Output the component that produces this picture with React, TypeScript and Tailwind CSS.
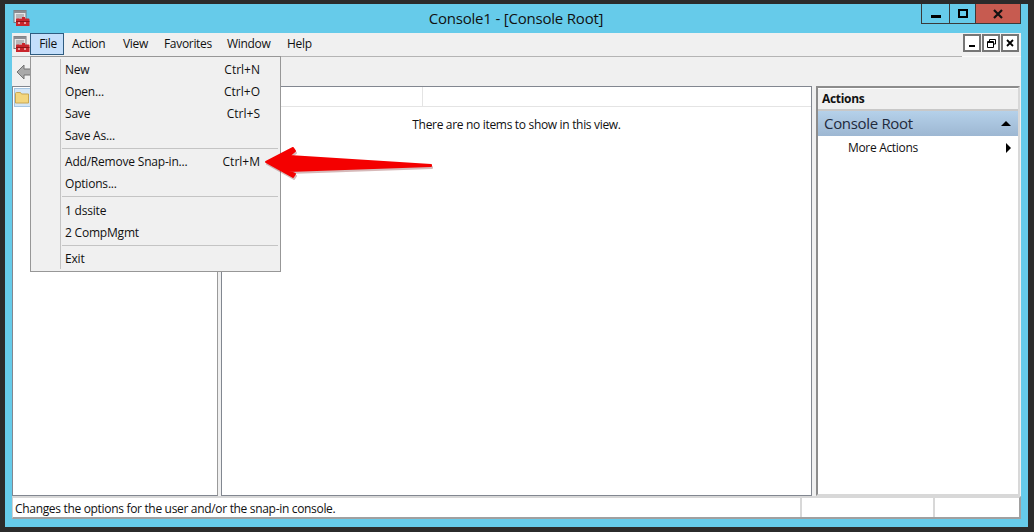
import React from 'react';

const font = "font-['Open_Sans','Noto_Sans',sans-serif] tracking-[-0.32px]";

const ConsoleIcon = () => (
  <svg width="17" height="17" viewBox="0 0 17 17" className="shrink-0">
    <rect x="1" y="0.5" width="12" height="12" fill="#e8e8ea" stroke="#77787c" />
    <rect x="1" y="0.5" width="12" height="2.5" fill="#8b8d92" />
    <path d="M3 5h8M3 7h8M3 9h3" stroke="#85878c" />
    <path d="M6 8.5h3V7h3v1.5h3.5a1 1 0 0 1 1 1V16H3V9.500a1 1 0 0 1 1-1z" fill="#c9252c" />
    <path d="M3 11.500h13.500" stroke="#8f1218" />
    <path d="M6 12v2M12 12v2" stroke="#f3c4c4" strokeWidth="1.500" />
  </svg>
);

const Separator = ({ className = 'h-[4px] pt-px' }: { className?: string }) => (
  <div className={`ml-[31px] mr-[2px] ${className}`}>
    <div className="h-px w-full bg-[#c4c4c4]" />
  </div>
);

const Item = ({ label, shortcut }: { label: string; shortcut?: string }) => (
  <div className="h-[22px] flex items-center justify-between pl-[34px] pr-[20px] text-[12px] text-[#101010]">
    <span className="tracking-[-0.2px]">{label}</span>
    {shortcut && <span className="tracking-normal">{shortcut}</span>}
  </div>
);

const FileMenu = () => (
  <div className="absolute left-[30px] top-[56px] w-[251px] h-[216px] bg-[#f0f0f0] border border-[#979797] pt-[2px] z-10">
    <div className="absolute left-[29px] top-[2px] bottom-[2px] w-px bg-[#c4c4c4]" />
    <Item label="New" shortcut="Ctrl+N" />
    <Item label="Open..." shortcut="Ctrl+O" />
    <Item label="Save" shortcut="Ctrl+S" />
    <Item label="Save As..." />
    <Separator />
    <Item label="Add/Remove Snap-in..." shortcut="Ctrl+M" />
    <Item label="Options..." />
    <Separator className="h-[5px] pt-px" />
    <Item label="1 dssite" />
    <Item label="2 CompMgmt" />
    <Separator />
    <Item label="Exit" />
  </div>
);

const Arrow = () => (
  <svg width="176" height="38" viewBox="0 0 176 38" className="absolute left-[260px] top-[145px] z-20">
    <path d="M6 18 L33 4 L35 7 L29 12 L171 21 L171 22 L28 27 L35 30 L33 33 Z" fill="#7a1a1a" stroke="#7a1a1a" strokeWidth="2" strokeLinejoin="round" opacity="0.3" transform="translate(1 1)" />
    <path d="M6 17 L33 3 L35 6 L29 11 L171 20 L171 21 L28 26 L35 29 L33 32 Z" fill="#f40000" stroke="#f40000" strokeWidth="2" strokeLinejoin="round" />
  </svg>
);

export default function App() {
  const menus = [
    { label: 'Action', cls: 'w-[51px]' },
    { label: 'View', cls: 'w-[41px]' },
    { label: 'Favorites', cls: 'w-[63px]' },
    { label: 'Window', cls: 'w-[60px]' },
    { label: 'Help', cls: 'w-[40px]' },
  ];
  return (
    <div className={`${font} w-[1034px] h-[532px] bg-[#2b2b2b] pt-[4px] pl-[5px] pr-[6px] pb-[5px] relative overflow-hidden`}>
      <div className="w-full h-full bg-[#66cbea] flex flex-col px-[7px]">
        {/* title bar */}
        <div className="h-[29px] shrink-0 -ml-[1px] flex items-start relative">
          <div className="w-[100px] pt-[6px] pl-[2px]"><ConsoleIcon /></div>
          <div className="flex-1 text-center text-[15px] leading-[29px] text-[#111] tracking-[-0.2px]">Console1 - [Console Root]</div>
          <div className="flex h-[20px] border border-t-0 border-[#3a3a3a]">
            <div className="w-[27px] flex items-end justify-center pb-[5px]"><div className="w-[10px] h-[3px] bg-black" /></div>
            <div className="w-[26px] border-l border-[#3a3a3a] flex items-center justify-center"><div className="w-[10px] h-[9px] border-2 border-black" /></div>
            <div className="w-[45px] border-l border-[#3a3a3a] bg-[#c75b50] flex items-center justify-center">
              <svg width="10" height="10" viewBox="0 0 10 10"><path d="M1 1l8 8M9 1l-8 8" stroke="#111" strokeWidth="2.200" /></svg>
            </div>
          </div>
        </div>

        {/* menu bar */}
        <div className="h-[24px] shrink-0 bg-[#f0f0f0] flex items-start relative">
          <div className="flex-1 h-[24px] border-b border-[#b4b4b4] flex items-center text-[12px] text-[#101010]">
            <div className="w-[18px] pl-[1px] -mt-[1px]"><ConsoleIcon /></div>
            <div className="w-[34px] h-[22px] -mt-[1px] bg-[#c4dffb] border border-[#2f5c80] flex items-center justify-center pl-[2px]">File</div>
            <div className="flex pl-[8px] -mt-[1px]">
              {menus.map((m) => <span key={m.label} className={m.cls}>{m.label}</span>)}
            </div>
          </div>
          <div className="flex gap-px pr-[2px] pt-[1px] pl-px border-b border-[#fafafa] h-[24px]">
            {['min', 'restore', 'close'].map((b) => (
              <div key={b} className="w-[18px] h-[18px] bg-white border-2 border-[#767676] flex items-center justify-center">
                {b === 'min' && <div className="w-[6px] h-[2px] bg-black mt-[6px]" />}
                {b === 'restore' && (
                  <svg width="9" height="9" viewBox="0 0 9 9"><path d="M2.500 2.500V.5h6v4.500h-2M.5 2.500h6v6h-6zM.5 3.500h6" stroke="#000" fill="none" /></svg>
                )}
                {b === 'close' && (
                  <svg width="8" height="8" viewBox="0 0 8 8"><path d="M1 1l6 6M7 1L1 7" stroke="#000" strokeWidth="1.800" /></svg>
                )}
              </div>
            ))}
          </div>
        </div>

        {/* toolbar */}
        <div className="h-[29px] shrink-0 bg-[#f0f0f0] flex items-center pl-[4px]">
          <svg width="16" height="16" viewBox="0 0 16 16">
            <path d="M8 1L1 8l7 7v-4h8V5H8z" fill="#a9a9a9" stroke="#737373" />
          </svg>
        </div>

        {/* panes */}
        <div className="flex-1 min-h-0 flex bg-[#f0f0f0]">
          <div className="w-[206px] bg-white border border-[#828790] border-r-[#9a9a9a] p-[1px]">
            <div className="w-[17px] h-[19px] bg-[#d4e6f6] border border-[#a6c6e2] flex items-center justify-center">
              <svg width="15" height="13" viewBox="0 0 15 13"><path d="M.5 2.500a1 1 0 0 1 1-1h4l1 1.500h7v9h-13z" fill="#f3d67e" stroke="#c8a653" /></svg>
            </div>
          </div>
          <div className="w-[3px]" />
          <div className="w-[591px] bg-white border border-[#828790]">
            <div className="h-[20px] w-[201px] border-b border-r border-[#e4e4e4]" />
            <div className="border-t border-[#e4e4e4] -mt-px" />
            <div className="text-center text-[12px] text-[#101010] pt-[9px]">There are no items to show in this view.</div>
          </div>
          <div className="w-[4px]" />
          <div className="flex-1 bg-white border-2 border-[#8c8c8c] border-r-[#d8d8d8] border-b-[#d8d8d8] flex flex-col mr-[1px]">
            <div className="h-[23px] bg-[#f0f0f0] border-t border-white border-b-2 border-b-[#c8c8c8] flex items-center pl-[4px] text-[12px] font-bold text-[#111]">Actions</div>
            <div className="h-[25px] bg-gradient-to-b from-[#b5d1ea] to-[#9db7d2] flex items-center justify-between pl-[6px] pr-[7px] text-[15px] text-[#1f2a3c]">
              <span>Console Root</span>
              <div className="w-0 h-0 border-x-[5px] border-x-transparent border-b-[5px] border-b-black" />
            </div>
            <div className="h-[23px] flex items-center justify-between pl-[30px] pr-[7px] text-[12px] text-[#101010]">
              <span>More Actions</span>
              <div className="w-0 h-0 border-y-[5px] border-y-transparent border-l-[5px] border-l-black" />
            </div>
          </div>
        </div>

        {/* status bar */}
        <div className="h-[23px] shrink-0 bg-white border-y-2 border-t-[#d8d8d8] border-b-[#a0a0a0] border-r-2 border-r-[#a0a0a0] border-l border-l-[#d0d0d0] flex text-[12px] text-[#101010]">
          <div className="flex-1 pl-[2px] leading-[21px]">Changes the options for the user and/or the snap-in console.</div>
          <div className="w-[133px] border-l-2 border-[#d8d8d8]" />
          <div className="w-[86px] border-l-2 border-[#d8d8d8]" />
        </div>
        <div className="h-[8px] shrink-0" />
      </div>
      <FileMenu />
      <Arrow />
    </div>
  );
}
